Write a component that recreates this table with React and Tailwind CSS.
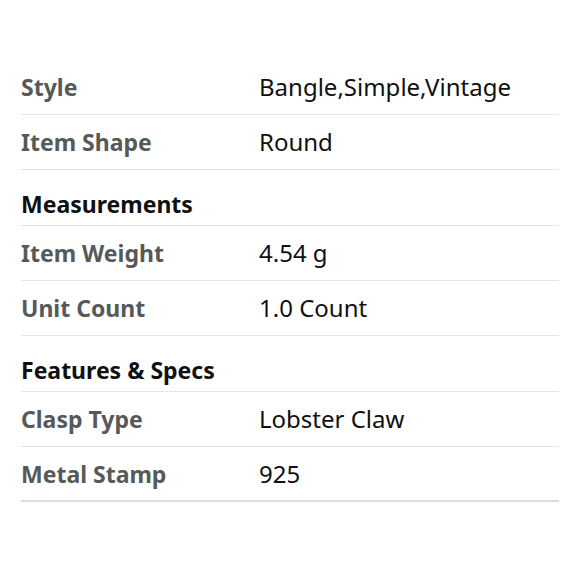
import React from "react";

const sections = [
  { header: null, rows: [["Style", "Bangle,Simple,Vintage"], ["Item Shape", "Round"]] },
  { header: "Measurements", rows: [["Item Weight", "4.54 g"], ["Unit Count", "1.0 Count"]] },
  { header: "Features & Specs", rows: [["Clasp Type", "Lobster Claw"], ["Metal Stamp", "925"]] },
];

export default function App() {
  return (
    <div className="w-[580px] h-[580px] bg-white pt-[60px] px-[21px]" style={{ fontFamily: '"Noto Sans", "Open Sans", sans-serif' }}>
      {sections.map((s, si) => (
        <div key={si}>
          {s.header && (
            <div className="h-[56px] flex items-end pb-[6px] border-b border-[#e3e6e6]">
              <span className="text-[23px] leading-[30px] font-bold text-[#0f1111]">{s.header}</span>
            </div>
          )}
          {s.rows.map(([k, v], ri) => {
            const last = si === sections.length - 1 && ri === s.rows.length - 1;
            return (
              <div
                key={k}
                className={
                  "h-[55px] flex items-center " +
                  (last ? "border-b-2 border-[#dddddd]" : "border-b border-[#e3e6e6]")
                }
              >
                <span className="w-[238px] text-[23px] leading-[30px] font-bold text-[#565959]">{k}</span>
                <span className="text-[24px] leading-[30px] text-[#0f1111]">{v}</span>
              </div>
            );
          })}
        </div>
      ))}
    </div>
  );
}
